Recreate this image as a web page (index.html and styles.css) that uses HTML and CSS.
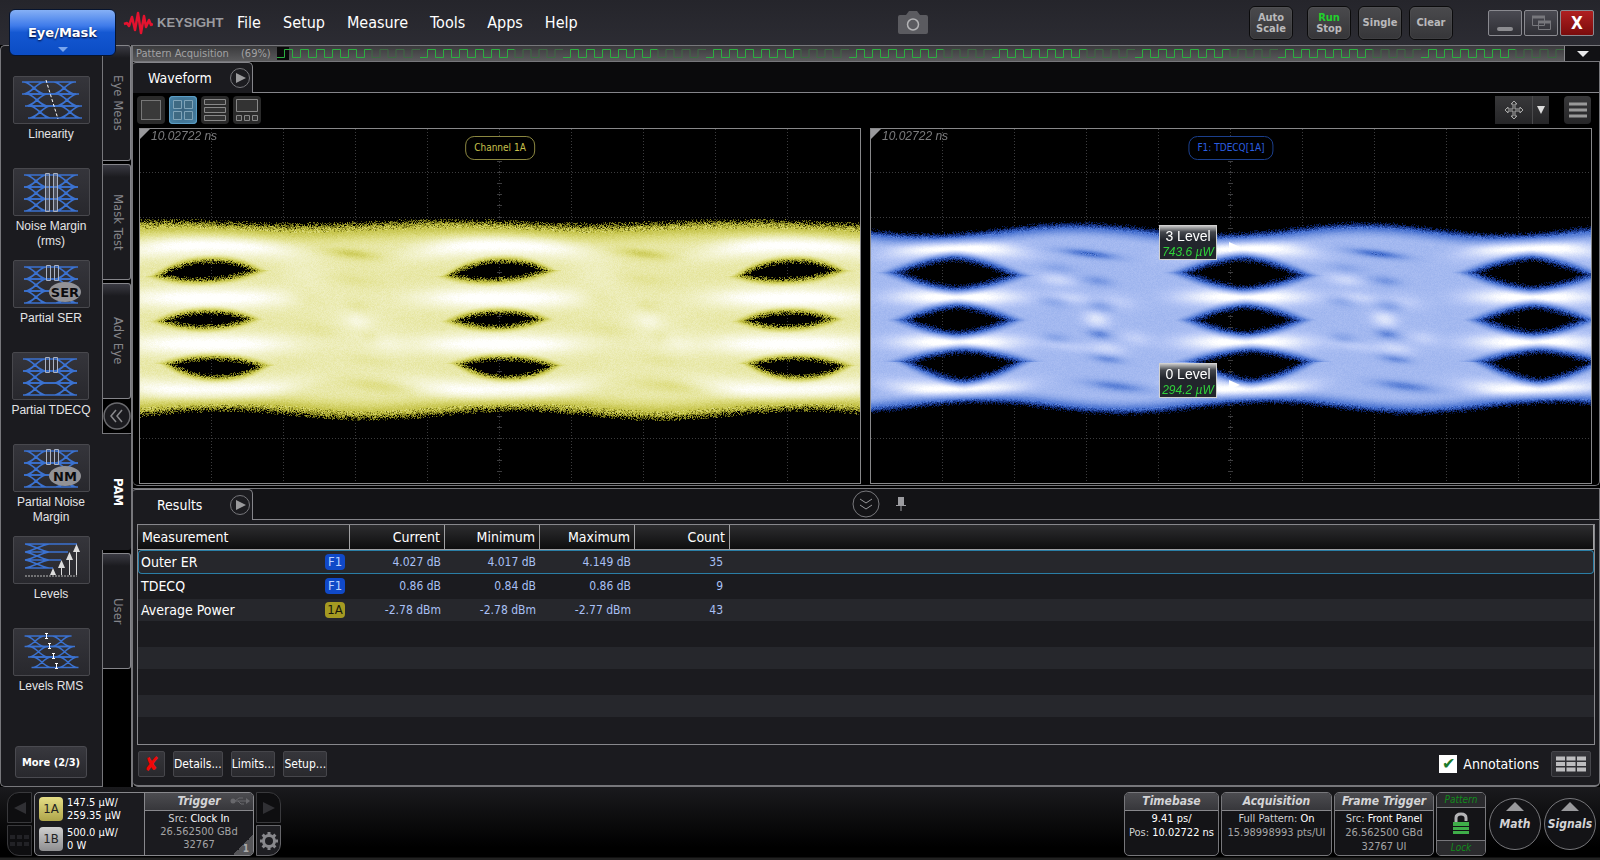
FILE: index.html
```html
<!DOCTYPE html>
<html lang="en">
<head>
  <meta charset="utf-8">
  <title>Keysight - Eye/Mask</title>
  <link rel="stylesheet" href="styles.css">
</head>
<body>
  <!-- shared icon parts -->
  <svg class="defs" width="0" height="0">
    <defs>
      <path id="band" d="M0 0H54M0 12H54M2 0C10 1 14 11 22 12M2 12C10 11 14 1 22 0M32 12C40 11 44 1 52 0M32 0C40 1 44 11 52 12" fill="none" stroke="#3b72d0" stroke-width="1.700"/>
      <g id="bands"><use href="#band" x="10" y="6"/><use href="#band" x="10" y="18"/><use href="#band" x="10" y="30"/></g>
      <g id="bars" fill="none" stroke="#aab2c4" stroke-width="1"><path d="M32.500 4.500h4v15h-4zM40.500 4.500h4v15h-4z"/></g>
      <g id="play"><circle cx="10" cy="10" r="9.500" fill="#1c1c20" stroke="#77777b"/><path d="M6 5v10l10-5z" fill="#9a9a9c"/></g>
    </defs>
  </svg>

  <header class="topbar">
    <button class="mode-btn">Eye/Mask<span class="mode-arrow"></span></button>
    <div class="logo">
      <svg width="30" height="24" viewBox="0 0 30 24"><path d="M1 13l3-1 2 3 3-9 3 13 3-17 3 20 3-17 2 11 3-7 2 5 2-1" fill="none" stroke="#e3132f" stroke-width="2.500" stroke-linejoin="round"/></svg>
      <span>KEYSIGHT</span>
    </div>
    <nav class="menu">
      <a href="#">File</a>
      <a href="#">Setup</a>
      <a href="#">Measure</a>
      <a href="#">Tools</a>
      <a href="#">Apps</a>
      <a href="#">Help</a>
    </nav>
    <button class="camera" aria-label="Screenshot">
      <svg width="30" height="24" viewBox="0 0 30 24"><path d="M2 4h6l3-4h8l3 4h6q2 0 2 2v15q0 2-2 2H2q-2 0-2-2V6q0-2 2-2z" fill="#5b5b60"/><circle cx="15" cy="13.500" r="5.500" fill="none" stroke="#b4b4b6" stroke-width="1.500"/></svg>
    </button>
    <div class="run-controls">
      <button class="run-btn auto">Auto<br>Scale</button>
      <button class="run-btn"><span class="running">Run</span><br>Stop</button>
      <button class="run-btn">Single</button>
      <button class="run-btn">Clear</button>
    </div>
    <div class="window-controls">
      <button class="win-btn" aria-label="Minimize"><svg width="32" height="24" viewBox="0 0 32 24"><rect x="8" y="16" width="16" height="4" rx="2" fill="#8c8c90"/></svg></button>
      <button class="win-btn" aria-label="Restore"><svg width="32" height="24" viewBox="0 0 32 24"><path d="M7.500 5.500h12v9h-12zM13.500 10.500h12v8h-12z" fill="none" stroke="#77777c"/><path d="M7 6h13M13 11h13" stroke="#77777c" stroke-width="3"/></svg></button>
      <button class="win-btn close" aria-label="Close">X</button>
    </div>
  </header>

  <div class="workspace">
    <aside class="sidebar">
      <div class="tools">
        <button class="tool"><span class="tool-icon"><svg width="75" height="46"><use href="#band" x="8" y="5"/><use href="#band" x="11" y="17"/><use href="#band" x="14" y="29"/><path d="M32 3l12 39" stroke="#fff" stroke-dasharray="3 2" fill="none"/></svg></span>Linearity</button>
        <button class="tool"><span class="tool-icon"><svg width="75" height="46"><use href="#bands"/><path d="M31.500 4.500h4v38h-4zM39.500 4.500h4v38h-4z" fill="#8a94ac55" stroke="#a9b0c0"/></svg></span>Noise Margin<br>(rms)</button>
        <button class="tool"><span class="tool-icon"><svg width="75" height="46"><use href="#bands"/><use href="#bars"/><ellipse cx="51" cy="31" rx="16" ry="10" fill="#929296"/><text x="51" y="36" class="badge-text">SER</text></svg></span>Partial SER</button>
        <button class="tool"><span class="tool-icon"><svg width="75" height="46"><use href="#bands"/><use href="#bars"/></svg></span>Partial TDECQ</button>
        <button class="tool"><span class="tool-icon"><svg width="75" height="46"><use href="#bands"/><use href="#bars"/><ellipse cx="51" cy="31" rx="16" ry="10" fill="#929296"/><text x="51" y="36" class="badge-text">NM</text></svg></span>Partial Noise<br>Margin</button>
        <button class="tool"><span class="tool-icon"><svg width="75" height="46"><path d="M11 7h52M11 15h43M11 23h36M11 31h28M11 7c8 1 16 7 24 8M11 15c8-1 16-7 24-8M11 15c8 1 16 7 24 8M11 23c8-1 16-7 24-8M11 23c8 1 16 7 24 8M11 31c8-1 16-7 24-8" fill="none" stroke="#3b72d0" stroke-width="1.700"/><path d="M11 39h52" stroke="#bbb" stroke-width="1" stroke-dasharray="2 1"/><path d="M47.500 38V26M55.500 38V19M62.500 38V11" stroke="#ddd"/><path d="M36 38l3-7 3 7zM44 31l3.500-8 3.500 8zM52 23l3.500-8 3.500 8zM59 15l3.500-8 3.500 8z" fill="#ddd"/></svg></span>Levels</button>
        <button class="tool"><span class="tool-icon"><svg width="75" height="46"><g transform="translate(1 1) scale(.87)"><use href="#band" x="11" y="7"/><use href="#band" x="15" y="19"/><use href="#band" x="19" y="31"/></g><path d="M31 4.500h3m-1.500 0v5m-1.500 0h3M34 14.500h3m-1.500 0v5m-1.500 0h3M38 24.500h3m-1.500 0v5m-1.500 0h3M41 34.500h3m-1.500 0v5m-1.500 0h3" fill="none" stroke="#fff"/></svg></span>Levels RMS</button>
        <button class="more-btn">More (2/3)</button>
      </div>
      <div class="side-tabs">
        <button class="side-tab">Eye Meas</button>
        <button class="side-tab">Mask Test</button>
        <button class="side-tab">Adv Eye</button>
        <button class="collapse" aria-label="Collapse"><svg width="28" height="28"><circle cx="14" cy="14" r="13" fill="#1b1b1f" stroke="#6a6a6e" stroke-width="1.500"/><path d="M13 8l-5 6 5 6M19 8l-5 6 5 6" fill="none" stroke="#8a8a8d" stroke-width="1.500"/></svg></button>
        <button class="side-tab active">PAM</button>
        <button class="side-tab">User</button>
      </div>
    </aside>

    <main class="main">
      <div class="acq-bar">
        <span class="acq-label">Pattern Acquisition</span>
        <span class="acq-percent">(69%)</span>
        <svg class="acq-wave" height="13">
          <defs>
            <pattern id="bits" width="143" height="13" patternUnits="userSpaceOnUse">
              <path d="M0 10.500h7.500v-8h8v8h8v-8h8v8h8v-8h8v8h8v-8h8v8h8v-8h8v8h8v-8h7" fill="none" stroke="#2bb040"/>
              <path d="M95 2.500v8h8v-8h8v8h8v-8h8v8h8v-8h8" fill="none" stroke="#3c6a42"/>
            </pattern>
          </defs>
          <rect width="12" height="13" fill="#0a0a0a"/>
          <rect width="100%" height="13" fill="url(#bits)"/>
        </svg>
        <button class="acq-menu" aria-label="Acquisition options"></button>
      </div>

      <section class="panel wave-panel">
        <div class="tab-strip">
          <div class="tab">Waveform<svg width="20" height="20"><use href="#play"/></svg></div>
          <div class="tab-rest"></div>
        </div>
        <div class="wave-toolbar">
          <button class="layout-btn" aria-label="Single"><svg width="28" height="28"><rect x="4.500" y="4.500" width="19" height="19" fill="#3a3a3a" stroke="#777"/></svg></button>
          <button class="layout-btn selected" aria-label="Grid"><svg width="28" height="28"><path d="M4.500 4.500h8v8h-8zM15.500 4.500h8v8h-8zM4.500 15.500h8v8h-8zM15.500 15.500h8v8h-8z" fill="#3f6a83" stroke="#7fa3b8"/></svg></button>
          <button class="layout-btn" aria-label="Stacked"><svg width="28" height="28"><path d="M3.500 3.500h21v5h-21zM3.500 11.500h21v5h-21zM3.500 19.500h21v5h-21z" fill="#333" stroke="#888"/></svg></button>
          <button class="layout-btn" aria-label="Zoom"><svg width="28" height="28"><path d="M3.500 3.500h21v12h-21zM3.500 19.500h5v5h-5zM11.500 19.500h5v5h-5zM19.500 19.500h5v5h-5z" fill="#333" stroke="#888"/></svg></button>
          <div class="spacer"></div>
          <div class="move-group">
            <button class="move-btn" aria-label="Move"><svg width="20" height="20"><path d="M10 1l3 3h-2v5h5V7l3 3-3 3v-2h-5v5h2l-3 3-3-3h2v-5H4v2l-3-3 3-3v2h5V4H7z" fill="#333" stroke="#aaa"/></svg></button>
            <button class="move-drop" aria-label="Move options"></button>
          </div>
          <button class="burger" aria-label="Menu"><svg width="18" height="16"><path d="M0 2h18M0 8h18M0 14h18" stroke="#999" stroke-width="3"/></svg></button>
        </div>
        <div class="plots">
          <div class="plot">
            <canvas class="eye" data-eye="channel"></canvas>
            <span class="corner"></span>
            <span class="plot-time">10.02722 ns</span>
            <span class="pill">Channel 1A</span>
          </div>
          <div class="plot">
            <canvas class="eye" data-eye="tdecq"></canvas>
            <span class="corner"></span>
            <span class="plot-time">10.02722 ns</span>
            <span class="pill pill-blue">F1: TDECQ[1A]</span>
            <div class="level level-3"><span>3 Level</span><em>743.6 µW</em></div>
            <div class="level level-0"><span>0 Level</span><em>294.2 µW</em></div>
          </div>
        </div>
      </section>

      <section class="panel results-panel">
        <div class="tab-strip">
          <div class="tab tab-results">Results<svg width="20" height="20"><use href="#play"/></svg></div>
          <div class="tab-rest">
            <button class="dock" aria-label="Hide results"><svg width="28" height="28"><circle cx="14" cy="14" r="13" fill="none" stroke="#77777b"/><path d="M8 9l6 4 6-4M8 15l6 4 6-4" fill="none" stroke="#99999c"/></svg></button>
            <button class="dock" aria-label="Pin"><svg width="14" height="18"><path d="M4 2h6v8h2v1H2v-1h2zM6.500 11h1v5h-1z" fill="#9c9ca0"/></svg></button>
          </div>
        </div>
        <div class="results-body">
          <div class="table-box">
            <table class="results">
              <thead>
                <tr><th class="col-name">Measurement</th><th>Current</th><th>Minimum</th><th>Maximum</th><th>Count</th><th class="col-rest"></th></tr>
              </thead>
              <tbody>
                <tr class="selected"><td class="name"><div>Outer ER<b class="src">F1</b></div></td><td>4.027 dB</td><td>4.017 dB</td><td>4.149 dB</td><td class="count">35</td><td></td></tr>
                <tr><td class="name"><div>TDECQ<b class="src">F1</b></div></td><td>0.86 dB</td><td>0.84 dB</td><td>0.86 dB</td><td class="count">9</td><td></td></tr>
                <tr><td class="name"><div>Average Power<b class="src src-1a">1A</b></div></td><td>-2.78 dBm</td><td>-2.78 dBm</td><td>-2.77 dBm</td><td class="count">43</td><td></td></tr>
                <tr><td colspan="6"></td></tr>
                <tr><td colspan="6"></td></tr>
                <tr><td colspan="6"></td></tr>
                <tr><td colspan="6"></td></tr>
              </tbody>
            </table>
          </div>
          <div class="results-actions">
            <button class="small-btn delete">✘</button>
            <button class="small-btn">Details...</button>
            <button class="small-btn">Limits...</button>
            <button class="small-btn">Setup...</button>
            <div class="spacer"></div>
            <label class="annotations"><input type="checkbox" checked>Annotations</label>
            <button class="small-btn grid-btn" aria-label="Table view"><svg width="30" height="16"><path d="M0 2.500h30M0 8h30M0 13.500h30" stroke="#bdbdbf" stroke-width="4" stroke-dasharray="9 1.500"/></svg></button>
          </div>
        </div>
      </section>
    </main>
  </div>

  <footer class="status">
    <div class="nav-col left">
      <button class="nav-btn" aria-label="Previous"><svg width="14" height="14"><path d="M13 1v12L1 7z" fill="#303034"/></svg></button>
      <button class="nav-btn" aria-label="Channels"><svg width="20" height="12"><path d="M0 2h20M0 9h20" stroke="#222226" stroke-width="4" stroke-dasharray="5 2"/></svg></button>
    </div>
    <div class="channel-box">
      <div class="channels">
        <button class="channel"><b class="ch-badge">1A</b><span>147.5 µW/<br>259.35 µW</span></button>
        <button class="channel"><b class="ch-badge grey">1B</b><span>500.0 µW/<br>0 W</span></button>
      </div>
      <div class="trigger">
        <h2>Trigger<svg class="usb" width="20" height="10"><path d="M1 5h16M5 5l4-3h4M8 5l3 3h3" fill="none" stroke="#68686c"/><path d="M16 2l4 3-4 3z" fill="#68686c"/><circle cx="3" cy="5" r="2.500" fill="#68686c"/></svg></h2>
        <p>Src: <i>Clock In</i></p>
        <p class="dim">26.562500 GBd</p>
        <p class="dim">32767</p>
        <span class="fold"><b>1</b></span>
      </div>
    </div>
    <div class="nav-col right">
      <button class="nav-btn" aria-label="Next"><svg width="14" height="14"><path d="M1 1v12l12-6z" fill="#303034"/></svg></button>
      <button class="nav-btn" aria-label="Settings"><svg width="20" height="20" viewBox="0 0 20 20"><circle cx="10" cy="10" r="5.500" fill="none" stroke="#88888c" stroke-width="3"/><path d="M10 1v3M10 16v3M1 10h3M16 10h3M3.600 3.600l2.200 2.200M14.200 14.200l2.200 2.200M16.400 3.600l-2.200 2.200M5.800 14.200l-2.200 2.200" stroke="#88888c" stroke-width="3"/></svg></button>
    </div>
    <div class="spacer"></div>
    <div class="info timebase"><h2>Timebase</h2><p><i>9.41 ps/</i></p><p>Pos: <i>10.02722 ns</i></p></div>
    <div class="info acquisition"><h2>Acquisition</h2><p>Full Pattern: <i>On</i></p><p class="dim">15.98998993 pts/UI</p></div>
    <div class="info frame-trigger"><h2>Frame Trigger</h2><p>Src: <i>Front Panel</i></p><p class="dim">26.562500 GBd</p><p class="dim">32767 UI</p></div>
    <button class="lock"><span>Pattern</span><svg width="18" height="24"><path d="M4 10V6q0-4 5-4t5 4v3" fill="none" stroke="#b4b4b6" stroke-width="3"/><path d="M1 10h16v4H1zM1 15h16v3H1zM1 19h16v3H1z" fill="#3fae49"/></svg><span>Lock</span></button>
    <button class="round"><span class="up"></span>Math</button>
    <button class="round"><span class="up"></span>Signals</button>
  </footer>

  <script src="eye.js"></script>
</body>
</html>
```
FILE: styles.css
```css
* {
  box-sizing: border-box;
}

body {
  margin: 0;
  height: 100vh;
  min-height: 720px;
  display: flex;
  flex-direction: column;
  background: #000;
  color: #fff;
  font-family: "DejaVu Sans Condensed", "DejaVu Sans", sans-serif;
  font-size: 14px;
  overflow: hidden;
}

button {
  font-family: inherit;
  color: inherit;
  padding: 0;
  border: 0;
  background: none;
  cursor: pointer;
}

svg {
  display: block;
}

.defs {
  position: absolute;
}

.spacer {
  flex: 1;
}

/* Top bar */
.topbar {
  position: relative;
  height: 45px;
  flex: none;
  display: flex;
  align-items: center;
  padding: 0 6px 0 123px;
  background: linear-gradient(#25252b, #2c2c33);
}

.mode-btn {
  position: absolute;
  left: 9px;
  top: 9px;
  z-index: 2;
  width: 107px;
  height: 47px;
  border: 1px solid #06142f;
  border-radius: 6px;
  background: linear-gradient(#86b0f5, #3f7bea 35%, #1458d2 50%, #0b4cc4);
  color: #fff;
  font: bold 13px "DejaVu Sans", sans-serif;
  text-shadow: 0 1px 2px #002;
}

.mode-arrow {
  position: absolute;
  left: 48px;
  bottom: 3px;
  border: 5px solid transparent;
  border-top-color: #7aa6ee;
  border-bottom: 0;
}

.logo {
  display: flex;
  align-items: center;
  gap: 4px;
  width: 114px;
  color: #9b9b9f;
  font: bold 13px "Liberation Sans", Arial, sans-serif;
}

.menu {
  display: flex;
  gap: 22px;
}

.menu a {
  color: #fff;
  font-size: 16px;
  text-decoration: none;
}

.camera {
  margin: 0 auto;
}

.run-controls {
  display: flex;
  gap: 7px;
  margin-right: 35px;
}

.run-btn {
  width: 44px;
  height: 34px;
  border: 1px solid #0b0b0c;
  border-radius: 6px;
  background: linear-gradient(#4a4a4d, #363639);
  box-shadow: inset 0 0 1px #888;
  color: #b9b9bb;
  font-size: 11px;
  font-weight: bold;
  line-height: 11px;
}

.run-btn.auto {
  margin-right: 7px;
}

.running {
  color: #22d02c;
}

.window-controls {
  display: flex;
  gap: 2px;
}

.win-btn {
  width: 34px;
  height: 26px;
  border: 1px solid #8a8a90;
  border-radius: 2px;
  background: linear-gradient(#4a4a52, #303036);
}

.win-btn.close {
  background: linear-gradient(#b02020, #7a0c0c);
  font-size: 17px;
  font-weight: bold;
}

/* Sidebar */
.workspace {
  flex: 1;
  min-height: 0;
  display: flex;
}

.sidebar {
  width: 131px;
  flex: none;
  display: flex;
}

.tools {
  width: 102px;
  display: flex;
  flex-direction: column;
  align-items: center;
  padding: 30px 1px 8px 0;
  border: 1px solid #77777b;
  border-right: 0;
  border-radius: 5px 0 0 5px;
  background: #1b1b1f;
}

.tool {
  height: 92px;
  flex: none;
  display: flex;
  flex-direction: column;
  align-items: center;
  font: 12px/15px "Liberation Sans", Arial, sans-serif;
  color: #e4e4e6;
}

.tool-icon {
  display: block;
  width: 77px;
  height: 48px;
  margin-bottom: 3px;
  border: 1px solid #48484d;
  border-radius: 2px;
  background: linear-gradient(#35353b, #28282d);
}

.badge-text {
  fill: #0c0c0e;
  font: bold 13px "DejaVu Sans", sans-serif;
  text-anchor: middle;
}

.more-btn {
  width: 72px;
  height: 32px;
  margin-top: auto;
  border: 1px solid #4a4a50;
  border-radius: 3px;
  background: linear-gradient(#38383e, #28282d);
  font-size: 11px;
  font-weight: bold;
}

.side-tabs {
  width: 29px;
  display: flex;
  flex-direction: column;
  border-left: 1px solid #77777b;
  background: #000;
}

.side-tab {
  height: 116px;
  flex: none;
  margin-bottom: 3px;
  border: 1px solid #85858a;
  border-width: 1px 1px 1px 0;
  border-radius: 0 3px 3px 0;
  background: linear-gradient(#3a3a42, #1b1b1f 12px);
  color: #85858a;
  font-size: 13px;
  writing-mode: vertical-rl;
  padding-left: 4px;
}

.collapse {
  height: 35px;
  flex: none;
  margin: -3px 0 0;
  border-bottom: 1px solid #77777b;
}

.side-tab.active {
  margin-left: -1px;
  border-color: transparent;
  background: #1b1b1f;
  color: #fff;
  font-weight: bold;
}

/* Acquisition progress */
.main {
  flex: 1;
  min-width: 0;
  display: flex;
  flex-direction: column;
  border-left: 2px solid #77777b;
}

.acq-bar {
  height: 17px;
  flex: none;
  display: flex;
  align-items: center;
  padding-left: 3px;
  border: 1px solid #77777b;
  border-width: 1px 0;
  background: linear-gradient(#3a3a3c, #5a5a5c);
  color: #a2a2a4;
  font-size: 11px;
}

.acq-label {
  width: 105px;
}

.acq-percent {
  width: 36px;
}

.acq-wave {
  flex: 1;
  min-width: 0;
}

.acq-menu {
  width: 36px;
  height: 15px;
  border-left: 1px solid #88888c;
  background: #111114;
}

.acq-menu::after {
  content: "";
  display: block;
  width: 0;
  margin: 0 auto;
  border: 6px solid transparent;
  border-top-color: #e8e8ea;
  border-bottom: 0;
}

/* Panels */
.panel {
  display: flex;
  flex-direction: column;
  border: 1px solid #77777b;
  border-width: 0 1px 2px 0;
  border-radius: 0 0 5px 5px;
}

.wave-panel {
  flex: 1;
  min-height: 0;
  border-bottom-width: 1px;
}

.tab-strip {
  flex: none;
  display: flex;
  height: 31px;
}

.tab {
  width: 120px;
  display: flex;
  align-items: center;
  justify-content: space-between;
  padding: 0 2px 0 15px;
  border: 1px solid #85858a;
  border-width: 1px 1px 0 0;
  border-radius: 3px 5px 0 0;
  background: #1b1b1f;
}

.tab-results {
  padding-left: 24px;
}

.tab-rest {
  flex: 1;
  display: flex;
  align-items: center;
  justify-content: center;
  gap: 14px;
  padding-right: 92px;
  border-bottom: 1px solid #85858a;
  background: #0a0a0c;
}

.wave-toolbar {
  height: 35px;
  flex: none;
  display: flex;
  align-items: center;
  gap: 4px;
  padding: 0 8px 1px 4px;
}

.layout-btn {
  width: 28px;
  height: 28px;
  border-radius: 4px;
  background: #2a2a2a;
}

.layout-btn.selected {
  background: radial-gradient(#39637e, #4884a8);
  box-shadow: inset 0 0 0 1px #5b9dc4;
}

.move-group {
  display: flex;
  margin-right: 11px;
}

.move-btn,
.move-drop,
.burger {
  display: flex;
  align-items: center;
  justify-content: center;
  height: 28px;
  background: linear-gradient(#38383a, #252527);
}

.move-btn {
  width: 37px;
}

.move-drop {
  width: 17px;
  border-left: 1px solid #4a4a4c;
}

.move-drop::after {
  content: "";
  border: 4px solid transparent;
  border-top: 8px solid #ddd;
  border-bottom: 0;
}

.burger {
  width: 27px;
  border-radius: 4px;
}

.plots {
  flex: 1;
  min-height: 0;
  display: flex;
  gap: 9px;
  padding: 0 7px 1px 6px;
}

.plot {
  position: relative;
  flex: 1;
  min-width: 0;
  border: 1px solid #88888a;
  background: #000;
}

.eye {
  position: absolute;
  width: 100%;
  height: 100%;
}

.corner {
  position: absolute;
  left: 0;
  top: 0;
  border: 5px solid #99999c;
  border-right-color: transparent;
  border-bottom-color: transparent;
}

.plot-time {
  position: absolute;
  left: 11px;
  top: 0;
  color: #7c7c7e;
  font: italic 12px/14px "Liberation Sans", Arial, sans-serif;
}

.pill {
  position: absolute;
  left: 50%;
  top: 7px;
  transform: translateX(-50%);
  padding: 0 8px;
  border: 1px solid #8b8740;
  border-radius: 9px;
  background: #000;
  color: #c9c14c;
  font-size: 10px;
  line-height: 22px;
  white-space: nowrap;
}

.pill-blue {
  border-color: #1b3f8c;
  color: #2b5fe0;
}

.level {
  position: absolute;
  left: 40%;
  width: 58px;
  height: 35px;
  padding-top: 2px;
  border: 1px solid #d0d0d0;
  background: linear-gradient(#c4c4c4, #45484e 6px, #22252c 14px);
  text-align: center;
  font: 14px/16px "Liberation Sans", Arial, sans-serif;
  white-space: nowrap;
}

.level span,
.level em {
  display: block;
}

.level em {
  color: #2fd13a;
  font-size: 12px;
}

.level-3 {
  top: 27%;
}

.level-0 {
  top: 66%;
}

.level::after {
  content: "";
  position: absolute;
  left: 69px;
  top: 16px;
  border: 5px solid transparent;
  border-left: 11px solid #fff;
  border-right: 0;
}

/* Results */
.results-panel {
  flex: none;
  margin-top: 2px;
  border-top-width: 1px;
  background: #1b1b1f;
}

.results-panel .tab-rest {
  background: #131316;
}

.results-body {
  padding: 4px 4px 8px;
}

.table-box {
  height: 221px;
  border: 1px solid #88888c;
}

.results {
  width: 100%;
  table-layout: fixed;
  border-collapse: separate;
  border-spacing: 0;
}

.results th {
  width: 95px;
  height: 25px;
  padding: 0 4px;
  border-right: 1px solid #a0a0a2;
  border-bottom: 1px solid #a0a0a2;
  background: linear-gradient(#2d2d2f, #0d0d0e);
  font-weight: normal;
  text-align: right;
}

.results .col-name {
  width: 212px;
  text-align: left;
}

.results .col-rest {
  width: auto;
}

.results td {
  height: 24px;
  padding: 0 4px;
  border: 1px solid #1b1b1f;
  border-width: 1px 0;
  color: #a9c0f4;
  font-size: 12px;
  text-align: right;
}

.results .count {
  padding-right: 7px;
}

.results tbody tr:nth-child(odd) td {
  background: #26272c;
}

.results .name {
  padding: 0 5px 0 3px;
  color: #fff;
  font-size: 14px;
}

.name div {
  display: flex;
  align-items: center;
  justify-content: space-between;
}

.results .selected td {
  border-color: #2a7ea6;
}

.results .selected .name {
  padding-left: 2px;
  border-left-width: 1px;
  border-radius: 4px 0 0 4px;
}

.selected td:last-child {
  border-right-width: 1px;
  border-radius: 0 4px 4px 0;
}

.src {
  width: 20px;
  border-radius: 4px;
  background: #1049c8;
  color: #bcd2ff;
  font-size: 13px;
  font-weight: normal;
  line-height: 16px;
  text-align: center;
}

.src-1a {
  background: #a59a22;
  color: #16160a;
}

.results-actions {
  display: flex;
  align-items: center;
  gap: 8px;
  padding: 6px 4px 0 1px;
}

.small-btn {
  height: 26px;
  padding: 0;
  border: 1px solid #46464b;
  border-radius: 2px;
  background: linear-gradient(#36363b, #29292d);
  font-size: 12px;
}

.delete {
  width: 27px;
  color: #f00808;
  font-size: 20px;
  line-height: 20px;
}

.annotations {
  display: flex;
  align-items: center;
  gap: 6px;
  margin-right: 4px;
}

.annotations input {
  appearance: none;
  width: 18px;
  height: 18px;
  margin: 0;
  background: #fff;
}

.annotations input:checked::after {
  content: "✔";
  display: block;
  color: #1c7a2c;
  font-size: 16px;
  line-height: 18px;
  text-align: center;
}

.grid-btn {
  padding: 0 4px;
}

/* Status bar */
.status {
  height: 73px;
  flex: none;
  display: flex;
  align-items: flex-start;
  gap: 2px;
  padding: 5px 4px 3px 7px;
  background: linear-gradient(#1a1a1d, #000 60px, #000 70px, #222 71px);
}

.nav-col {
  width: 25px;
  height: 64px;
  display: flex;
  flex-direction: column;
  gap: 2px;
}

.nav-btn {
  flex: 1;
  display: flex;
  align-items: center;
  justify-content: center;
  overflow: hidden;
  border: 1px solid #39393c;
  background: #0e0e10;
}

.left .nav-btn:first-child {
  border-radius: 12px 0 0 0;
}

.left .nav-btn:last-child {
  border-radius: 0 0 0 12px;
}

.right .nav-btn:first-child {
  border-radius: 0 12px 0 0;
}

.right .nav-btn:last-child {
  border-radius: 0 0 12px 0;
  border-color: #66666a;
  background: #1e1e22;
}

.channel-box {
  width: 220px;
  height: 64px;
  display: flex;
  overflow: hidden;
  border: 1px solid #88888c;
  border-radius: 5px;
  background: #1b1b1f;
}

.channels {
  flex: 1;
  padding: 1px 4px;
}

.channel {
  display: flex;
  align-items: center;
  gap: 4px;
  height: 30px;
  font-size: 11px;
  line-height: 13px;
  text-align: left;
}

.ch-badge {
  width: 24px;
  border-radius: 4px;
  background: linear-gradient(#e6de86, #aea54a);
  color: #222;
  font-size: 13px;
  font-weight: normal;
  line-height: 24px;
  text-align: center;
}

.ch-badge.grey {
  background: linear-gradient(#cfcfcf, #8e8e90);
}

.trigger {
  position: relative;
  width: 109px;
  border-left: 1px solid #88888c;
  text-align: center;
}

.status h2 {
  margin: 0;
  background: linear-gradient(#4c4c50, #37373b);
  border-bottom: 1px solid #88888c;
  color: #d4d4d6;
  font-size: 12px;
  font-style: italic;
  line-height: 17px;
}

.status p {
  margin: 0;
  color: #d0d0d2;
  font-size: 11px;
  line-height: 13px;
}

.status p i {
  color: #fff;
  font-style: normal;
}

.status p.dim {
  color: #a4a4a6;
}

.trigger p:nth-child(2),
.info p:nth-child(2) {
  padding-top: 1px;
}

.usb {
  position: absolute;
  right: 3px;
  top: 3px;
}

.fold {
  position: absolute;
  right: 0;
  bottom: 0;
  width: 20px;
  height: 20px;
  background: linear-gradient(135deg, transparent 50%, #555558 50%);
}

.fold b {
  position: absolute;
  right: 4px;
  bottom: 0;
  color: #aaa;
  font-size: 10px;
  line-height: 12px;
}

.info {
  height: 64px;
  overflow: hidden;
  border: 1px solid #77777b;
  border-radius: 5px;
  background: #141417;
  text-align: center;
  white-space: nowrap;
}

.info p {
  line-height: 14px;
}

.timebase {
  width: 95px;
}

.acquisition {
  width: 111px;
}

.frame-trigger {
  width: 100px;
}

.lock {
  width: 50px;
  height: 64px;
  display: flex;
  flex-direction: column;
  align-items: center;
  justify-content: space-between;
  overflow: hidden;
  border: 1px solid #77777b;
  border-radius: 5px;
  background: #141417;
}

.lock span {
  width: 100%;
  background: #2a2a2d;
  border-bottom: 1px solid #77777b;
  color: #128a1c;
  font-size: 10px;
  font-style: italic;
  line-height: 14px;
}

.lock span:last-child {
  border-top: 1px solid #77777b;
  border-bottom: 0;
}

.round {
  position: relative;
  width: 52px;
  height: 52px;
  margin: 6px 0 0 1px;
  border: 1px solid #77777b;
  border-radius: 50%;
  background: #131316;
  color: #d4d4d6;
  font-size: 12px;
  font-style: italic;
  font-weight: bold;
}

.up {
  position: absolute;
  left: 16px;
  top: 3px;
  border: 9px solid transparent;
  border-top: 0;
  border-bottom-color: #99999c;
}
```
FILE: eye.js
```javascript
// Eye diagrams, laid out on a 720 x 353 screen and scaled to the plot
const EYES = {
  channel: {
    center: 360,
    period: 291,
    noise: 0.22,
    soft: 6,
    falloff: 26,
    spread: 84,
    rail: 10,
    top: [95, 2, -2],
    bottom: [282, 4.5, 0.3],
    power: 2.2,
    // x, y, half width, height up, height down, tilt
    holes: [
      [-2, 143, 48, 12, 7, -0.05],
      [-3, 190, 43, 8, 7, -0.02],
      [6, 235, 46, 7, 12, 0.02]
    ],
    rails: [115, 168, 214, 262],
    // x, y, radius x, radius y, strength
    spots: [
      [143, 124, 26, 5, -0.22], [145, 150, 24, 6, -0.07], [148, 176, 12, 6, -0.08],
      [148, 191, 14, 8, 0.16], [160, 206, 9, 6, -0.08], [178, 214, 18, 9, 0.12],
      [96, 168, 18, 9, -0.08], [110, 200, 22, 8, -0.08], [158, 230, 22, 6, -0.07],
      [170, 256, 32, 6, -0.12], [145, 200, 50, 40, 0.08], [95, 145, 25, 14, 0.08]
    ],
    palette: [[0, 0, 0, 0], [0.12, 105, 104, 20], [0.3, 192, 190, 62], [0.5, 222, 221, 130], [0.7, 238, 238, 190], [1, 255, 255, 253]]
  },
  tdecq: {
    center: 374,
    period: 288,
    noise: 0.12,
    soft: 8,
    falloff: 18,
    spread: 64,
    rail: 8,
    top: [101, 5.5, 0.6],
    bottom: [276, 5.5, 0.5],
    power: 1.5,
    holes: [
      [-2, 144, 54, 14, 13, 0.02],
      [0, 190, 47, 12, 12, 0],
      [6, 232, 51, 10, 17, 0]
    ],
    rails: [118, 167, 212, 260],
    spots: [
      [132, 124, 28, 4, -0.3], [140, 151, 16, 5, -0.16], [143, 176, 14, 6, -0.16],
      [139, 189, 13, 8, 0.24], [142, 204, 12, 5, -0.22], [150, 218, 18, 6, 0.16],
      [100, 150, 18, 6, 0.16], [116, 168, 22, 6, 0.14], [96, 172, 14, 5, -0.1],
      [98, 208, 14, 5, -0.12], [178, 208, 16, 7, 0.12], [150, 229, 16, 4, -0.2],
      [159, 256, 30, 5, -0.24], [110, 216, 26, 5, 0.1], [100, 138, 18, 5, -0.1],
      [160, 172, 20, 8, 0.1]
    ],
    palette: [[0, 0, 0, 0], [0.12, 12, 38, 112], [0.3, 62, 106, 205], [0.5, 132, 161, 230], [0.7, 184, 200, 246], [1, 255, 255, 255]]
  }
};

let seed = 7;
function random() {
  seed = (seed * 1664525 + 1013904223) % 4294967296;
  return seed / 4294967296;
}

function smooth(v) {
  v = Math.max(0, Math.min(1, v));
  return v * v * (3 - 2 * v);
}

function density(eye, x, y) {
  const half = eye.period / 2;
  // distance to the nearest eye center
  let dx = (x - eye.center + eye.period * 10) % eye.period;
  if (dx > half) dx -= eye.period;
  const phase = dx / eye.period * Math.PI * 2;
  const top = eye.top[0] + eye.top[1] * Math.cos(phase + eye.top[2]);
  const bottom = eye.bottom[0] - eye.bottom[1] * Math.cos(phase - eye.bottom[2]);
  const inside = Math.min(y - top, bottom - y);
  if (inside < -8) return 0;

  let v = 0.62;
  const near = Math.exp(-Math.pow(Math.abs(dx) / eye.spread, 3));
  for (const rail of eye.rails) {
    const bend = rail < 140 ? dx * dx / 900 : rail > 240 ? -dx * dx / 900 : 0;
    v += 0.42 * near * Math.exp(-Math.pow((y - rail - bend) / eye.rail, 2));
  }
  for (const s of eye.spots) {
    const sx = ((dx + eye.period) % eye.period) - s[0];
    v += s[4] * Math.exp(-Math.pow(sx / s[2], 2) - Math.pow((y - s[1] - sx * 0.12) / s[3], 2));
  }
  for (const h of eye.holes) {
    const ux = dx - h[0];
    const dy = y - h[1] - ux * h[5];
    const height = dy < 0 ? h[3] : h[4];
    const edge = height * (1 - Math.pow(Math.abs(ux / h[2]), eye.power));
    v *= smooth((Math.abs(dy) - edge + 4) / (eye.soft * 2));
  }
  return v * (0.4 * smooth((inside + 5) / 9) + 0.6 * smooth((inside + 3) / eye.falloff));
}

function colour(palette, v) {
  let i = 1;
  while (i < palette.length - 1 && v > palette[i][0]) i++;
  const a = palette[i - 1];
  const b = palette[i];
  const t = Math.min(1, (v - a[0]) / (b[0] - a[0]));
  return [1, 2, 3].map(k => a[k] + (b[k] - a[k]) * t);
}

function drawGrid(ctx, w, h) {
  ctx.strokeStyle = '#3c3c3e';
  ctx.setLineDash([1, 2]);
  ctx.beginPath();
  for (let i = 1; i < 10; i++) {
    const x = Math.round(w * i / 10) - 0.5;
    ctx.moveTo(x, 0);
    ctx.lineTo(x, h);
  }
  for (let i = 1; i < 8; i++) {
    const y = Math.round(h * i / 8) - 0.5;
    ctx.moveTo(0, y);
    ctx.lineTo(w, y);
  }
  ctx.stroke();

  ctx.setLineDash([]);
  ctx.beginPath();
  for (let i = 3; i < 32; i++) {
    const y = Math.round(h * i / 32) - 0.5;
    ctx.moveTo(w / 2 - 3, y);
    ctx.lineTo(w / 2 + 2, y);
  }
  ctx.stroke();
}

function drawEye(canvas) {
  const eye = EYES[canvas.dataset.eye];
  const w = canvas.width = canvas.clientWidth;
  const h = canvas.height = canvas.clientHeight;
  const ctx = canvas.getContext('2d');
  ctx.fillRect(0, 0, w, h);
  drawGrid(ctx, w, h);

  const image = ctx.getImageData(0, 0, w, h);
  for (let y = 0; y < h; y++) {
    for (let x = 0; x < w; x++) {
      const base = density(eye, x * 720 / w, y * 353 / h);
      if (base < 0.005) continue;
      const grain = (random() + random() - 1) * eye.noise;
      const v = base + grain * (base < 0.35 ? 1 : 0.25);
      if (v < 0.05) continue;
      const c = colour(eye.palette, v);
      const p = (y * w + x) * 4;
      image.data[p] = c[0];
      image.data[p + 1] = c[1];
      image.data[p + 2] = c[2];
    }
  }
  ctx.putImageData(image, 0, 0);
}

function drawAll() {
  document.querySelectorAll('.eye').forEach(drawEye);
}

window.addEventListener('resize', drawAll);
drawAll();
```
